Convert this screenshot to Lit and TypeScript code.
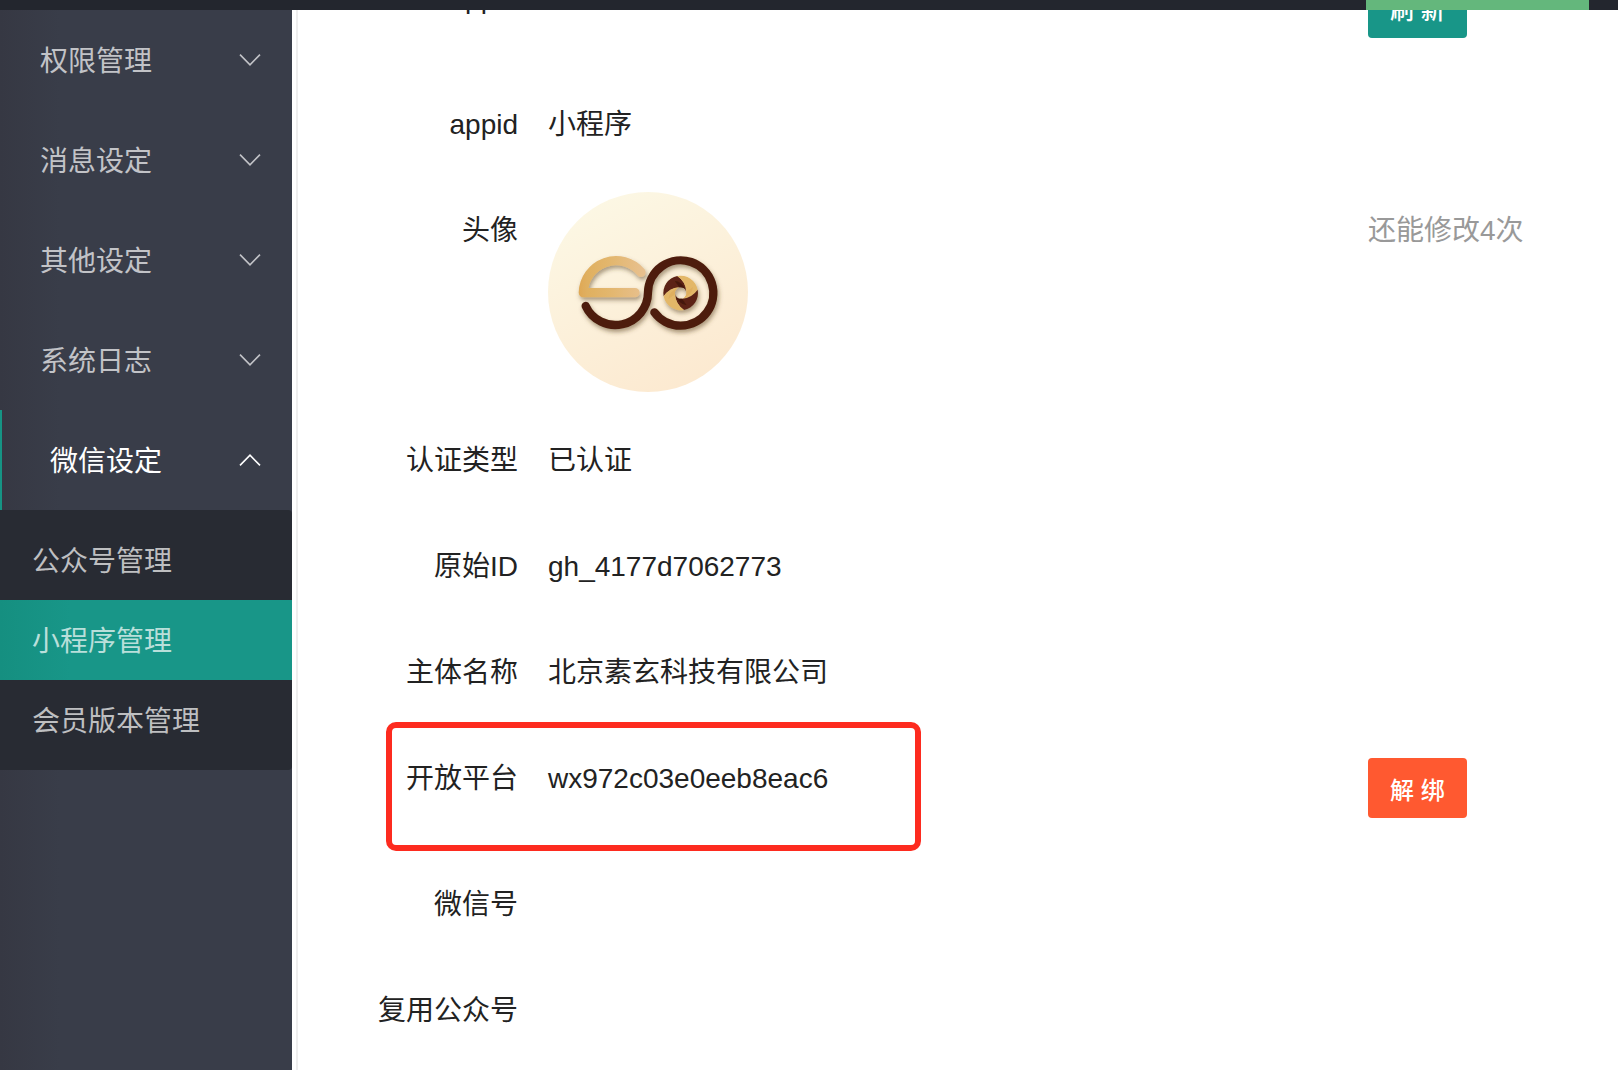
import { LitElement, html, css, svg, nothing } from "lit";
import { customElement, property, state } from "lit/decorators.js";

interface MenuGroup {
  label: string;
  children?: string[];
}

interface InfoRow {
  label: string;
  value?: string;
  avatar?: boolean;
  hint?: string;
  action?: { text: string; kind: "primary" | "danger" };
  marked?: boolean;
}

const MENU: MenuGroup[] = [
  { label: "权限管理" },
  { label: "消息设定" },
  { label: "其他设定" },
  { label: "系统日志" },
  { label: "微信设定", children: ["公众号管理", "小程序管理", "会员版本管理"] },
];

const ROWS: InfoRow[] = [
  { label: "appid", action: { text: "刷 新", kind: "primary" } },
  { label: "appid", value: "小程序" },
  { label: "头像", avatar: true, hint: "还能修改4次" },
  { label: "认证类型", value: "已认证" },
  { label: "原始ID", value: "gh_4177d7062773" },
  { label: "主体名称", value: "北京素玄科技有限公司" },
  {
    label: "开放平台",
    value: "wx972c03e0eeb8eac6",
    action: { text: "解 绑", kind: "danger" },
    marked: true,
  },
  { label: "微信号" },
  { label: "复用公众号" },
];

@customElement("side-menu")
export class SideMenu extends LitElement {
  @state() private current = "小程序管理";

  static styles = css`
    :host {
      display: block;
      background: linear-gradient(to right, #363843, #393d49 60px);
    }
    ul {
      list-style: none;
      margin: 0;
      padding: 0;
    }
    button,
    a {
      box-sizing: border-box;
      display: flex;
      align-items: center;
      width: 100%;
      font: inherit;
      text-decoration: none;
      color: #c2c3c7;
      cursor: pointer;
    }
    .text {
      padding-top: 3px;
    }
    .group {
      justify-content: space-between;
      height: 100px;
      padding: 0 32px 0 40px;
      border: 0;
      background: none;
    }
    .group.open {
      color: #fff;
      padding-left: 48px;
      border-left: 2px solid #169484;
    }
    .chevron {
      width: 20px;
      height: 12px;
      overflow: visible;
      fill: none;
      stroke: currentColor;
      stroke-width: 1.6;
    }
    .open .chevron {
      transform: rotate(180deg);
    }
    .sub {
      padding: 10px 0;
      border-radius: 0 4px 4px 0;
      background: #282b33;
    }
    .link {
      height: 80px;
      padding: 0 32px;
      color: #bebfc1;
    }
    .link.current {
      background: linear-gradient(to right, #158f80, #189688 70px);
      color: #b9dfda;
    }
  `;

  private select(event: Event, name: string) {
    event.preventDefault();
    this.current = name;
  }

  render() {
    return html`<nav>
      <ul>
        ${MENU.map(
          (g) => html`<li>
            <button
              class="group ${g.children ? "open" : ""}"
              aria-expanded=${g.children ? "true" : "false"}
            >
              <span class="text">${g.label}</span>
              <svg class="chevron" viewBox="0 0 20 12" aria-hidden="true">
                <path d="M0 0.6 L10 10.8 L20 0.6" />
              </svg>
            </button>
            ${g.children
              ? html`<ul class="sub">
                  ${g.children.map(
                    (c) => html`<li>
                      <a
                        href="#"
                        class="link ${c === this.current ? "current" : ""}"
                        @click=${(e: Event) => this.select(e, c)}
                        ><span class="text">${c}</span></a
                      >
                    </li>`
                  )}
                </ul>`
              : nothing}
          </li>`
        )}
      </ul>
    </nav>`;
  }
}

@customElement("brand-avatar")
export class BrandAvatar extends LitElement {
  static styles = css`
    :host {
      display: block;
      width: 200px;
      height: 200px;
    }
    svg {
      display: block;
      width: 100%;
      height: 100%;
    }
  `;

  private blades() {
    return [0, 90, 180, 270].map(
      (angle) => svg`<g transform="rotate(${angle} 452 339)">
        <path
          fill=${angle % 180 === 0 ? "#5c2413" : "#e3b768"}
          d="M401 349 A52 52 0 0 1 442 288 Q467 305 469 335 A17 17 0 0 0 448 322 Q418 324 401 349 Z"
        />
        <path
          fill=${angle % 180 === 0 ? "#45180c" : "#dfaf5f"}
          d="M434 302 Q458 304 469 335 A17 17 0 0 0 448 322 Z"
        />
      </g>`
    );
  }

  render() {
    return html`<svg viewBox="54 36 600 600" role="img" aria-label="头像">
      <defs>
        <linearGradient id="bg" x1="0.2" y1="0" x2="0.7" y2="1">
          <stop offset="0" stop-color="#fcf8e5" />
          <stop offset="1" stop-color="#fce9d0" />
        </linearGradient>
        <linearGradient id="gold" gradientUnits="userSpaceOnUse" x1="150" y1="0" x2="340" y2="0">
          <stop offset="0" stop-color="#dfa957" />
          <stop offset="0.12" stop-color="#e0b060" />
          <stop offset="0.5" stop-color="#e3b76f" />
          <stop offset="1" stop-color="#e8c08e" />
        </linearGradient>
        <filter id="shadow" x="-10%" y="-10%" width="125%" height="130%">
          <feDropShadow dx="4" dy="9" stdDeviation="7" flood-color="#5a4020" flood-opacity="0.5" />
        </filter>
      </defs>
      <circle cx="354" cy="336" r="300" fill="url(#bg)" />
      <g filter="url(#shadow)" fill="none" stroke-linecap="round">
        <path
          d="M333 277 A98 98 0 0 0 160 338 H315"
          stroke="url(#gold)"
          stroke-width="28"
          stroke-linejoin="round"
        />
        <path
          d="M167 378 A98 98 0 0 0 354 337 A98 98 0 1 1 373 397"
          stroke="#4e1d0c"
          stroke-width="25"
        />
        <g>${this.blades()}</g>
      </g>
    </svg>`;
  }
}

@customElement("info-row")
export class InfoRowElement extends LitElement {
  @property({ attribute: false }) row!: InfoRow;

  static styles = css`
    :host {
      display: grid;
      grid-template-columns: 226px 1fr 250px;
      align-items: start;
      position: relative;
      margin-bottom: 30px;
    }
    .cell {
      padding: 18px 0 16px;
      min-height: 42px;
      line-height: 42px;
    }
    .label {
      text-align: right;
    }
    .value {
      padding-left: 30px;
    }
    .avatar {
      padding: 0 0 0 30px;
    }
    .hint {
      color: #999;
    }
    .action {
      padding: 18px 0;
    }
    .btn {
      display: block;
      height: 60px;
      padding: 6px 22px 0;
      border: 0;
      border-radius: 4px;
      color: #fff;
      font: inherit;
      font-size: 24px;
      font-weight: 500;
      cursor: pointer;
    }
    .primary {
      background: #189688;
    }
    .danger {
      background: #ff5930;
    }
    .mark {
      position: absolute;
      box-sizing: border-box;
      left: 94px;
      top: -18px;
      width: 535px;
      height: 129px;
      border: 6px solid #fd2b1f;
      border-radius: 10px;
      pointer-events: none;
    }
  `;

  render() {
    const r = this.row;
    return html`
      <div class="cell label">${r.label}</div>
      ${r.avatar
        ? html`<div class="avatar"><brand-avatar></brand-avatar></div>`
        : html`<div class="cell value">${r.value ?? nothing}</div>`}
      ${r.action
        ? html`<div class="action">
            <button class="btn ${r.action.kind}">${r.action.text}</button>
          </div>`
        : html`<div class="cell hint">${r.hint ?? nothing}</div>`}
      ${r.marked ? html`<div class="mark"></div>` : nothing}
    `;
  }
}

@customElement("app-root")
export class AppRoot extends LitElement {
  static styles = css`
    :host {
      display: grid;
      grid-template: 10px minmax(0, 1fr) / 292px minmax(0, 1fr);
      height: 100vh;
      overflow: hidden;
      background: #fff;
      color: #222;
      font: 28px/40px "Liberation Sans", "Noto Sans CJK SC", sans-serif;
    }
    .top {
      grid-column: 1 / -1;
      display: flex;
      justify-content: flex-end;
      padding-right: 29px;
      background: #23262e;
    }
    .tab {
      width: 223px;
      background: #64b77c;
    }
    main {
      overflow: hidden;
      background: linear-gradient(#eee, #eee) 4px 0 / 2px 100% no-repeat;
    }
    .rows {
      margin-top: -50px;
    }
  `;

  render() {
    return html`
      <header class="top"><div class="tab"></div></header>
      <side-menu></side-menu>
      <main>
        <div class="rows">
          ${ROWS.map((row) => html`<info-row .row=${row}></info-row>`)}
        </div>
      </main>
    `;
  }
}
